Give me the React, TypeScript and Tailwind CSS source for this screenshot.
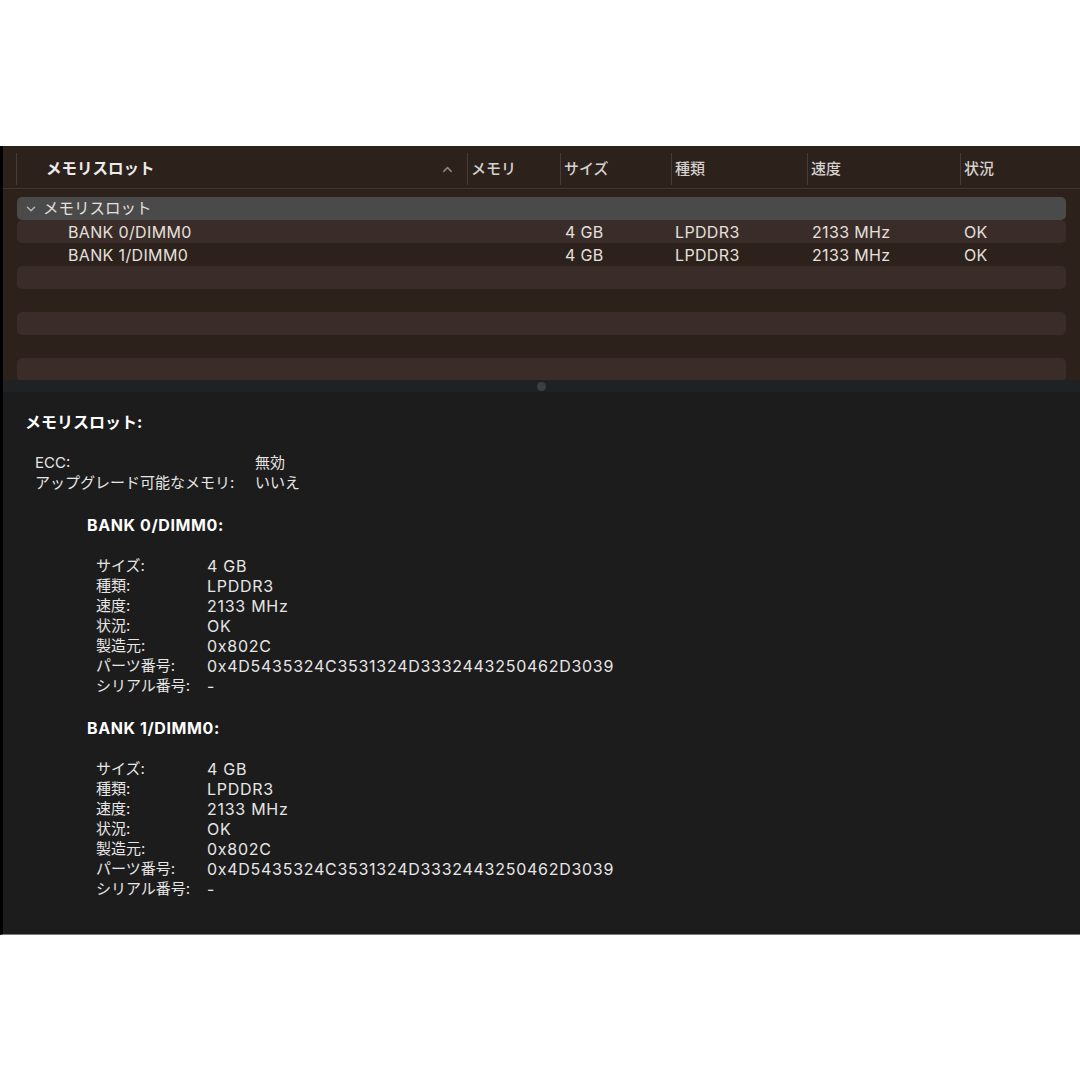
import { ChevronDown, ChevronUp } from "lucide-react";

const FONT = "font-['Inter','Noto_Sans_CJK_JP',sans-serif]";
// latin text in the source is wider than Inter at the same size
const LATIN = "text-[16px] tracking-[0.72px]";
const ROW_LATIN = "text-[16px] tracking-[0.35px]";

const columns = [
  { label: "メモリ", width: "w-[93px]" },
  { label: "サイズ", width: "w-[111px]" },
  { label: "種類", width: "w-[136px]" },
  { label: "速度", width: "w-[153px]" },
  { label: "状況", width: "flex-1" },
];

const banks = [
  {
    name: "BANK 0/DIMM0",
    size: "4 GB",
    type: "LPDDR3",
    speed: "2133 MHz",
    status: "OK",
    maker: "0x802C",
    part: "0x4D5435324C3531324D3332443250462D3039",
    serial: "-",
  },
  {
    name: "BANK 1/DIMM0",
    size: "4 GB",
    type: "LPDDR3",
    speed: "2133 MHz",
    status: "OK",
    maker: "0x802C",
    part: "0x4D5435324C3531324D3332443250462D3039",
    serial: "-",
  },
];

function Separator() {
  return <span className="w-px h-[32px] bg-[#4a3c36] shrink-0" />;
}

function HeaderRow() {
  return (
    <div className="h-[43px] pt-[4px] flex items-center border-b border-[#45352e] shrink-0">
      <div className="w-[13px] shrink-0" />
      <div className="w-[451px] flex items-center shrink-0">
        <Separator />
        <span className="pl-[29px] font-bold text-[15.5px] text-[#ececec]">メモリスロット</span>
        <ChevronUp className="ml-auto mr-[12px] w-[15px] h-[15px] text-[#8b8380]" strokeWidth={2.5} />
      </div>
      {columns.map((c) => (
        <div key={c.label} className={`${c.width} flex items-center shrink-0`}>
          <Separator />
          <span className="pl-[3px] font-medium text-[15px] text-[#d6d2d0]">{c.label}</span>
        </div>
      ))}
    </div>
  );
}

function DataRow({ bank, light }: { bank: (typeof banks)[number]; light: boolean }) {
  return (
    <div
      className={`h-[23px] flex items-center rounded-[5px] text-[#e4e0de] ${ROW_LATIN} ${
        light ? "bg-[#3a2c28]" : ""
      }`}
    >
      <div className="w-[450px] pl-[51px] shrink-0">{bank.name}</div>
      <div className="w-[93px] shrink-0" />
      <div className="w-[111px] pl-[5px] shrink-0">{bank.size}</div>
      <div className="w-[136px] pl-[4px] shrink-0">{bank.type}</div>
      <div className="w-[153px] pl-[5px] shrink-0">{bank.speed}</div>
      <div className="flex-1 pl-[4px]">{bank.status}</div>
    </div>
  );
}

function DetailRow({
  label,
  value,
  labelWidth,
  latin = true,
}: {
  label: string;
  value: string;
  labelWidth: string;
  latin?: boolean;
}) {
  return (
    <div className="flex h-[20px] items-center">
      <span className={`${labelWidth} shrink-0`}>{label}</span>
      <span className={latin ? LATIN : ""}>{value}</span>
    </div>
  );
}

export default function App() {
  return (
    <div className={`w-[1080px] h-[1080px] bg-white flex flex-col ${FONT}`}>
      <div className="h-[146px] shrink-0" />

      <div className="h-[789px] flex flex-col border-l-[3px] border-black bg-[#1c1c1c] border-b border-b-[#7a7a7a] shrink-0">
        {/* Table */}
        <div className="h-[234px] bg-[#2d211c] flex flex-col overflow-hidden shrink-0">
          <HeaderRow />
          <div className="pt-[8px] pl-[14px] pr-[14px] flex flex-col">
            <div className="h-[23px] flex items-center rounded-[5px] bg-[#4b4a4a] pl-[7px] text-[15.5px] text-[#e4e0de]">
              <ChevronDown className="w-[14px] h-[14px] text-[#b8b4b2]" strokeWidth={2.5} />
              <span className="pl-[5px]">メモリスロット</span>
            </div>
            {banks.map((b, i) => (
              <DataRow key={b.name} bank={b} light={i % 2 === 0} />
            ))}
            {[0, 1, 2, 3, 4].map((i) => (
              <div key={i} className={`h-[23px] shrink-0 rounded-[5px] ${i % 2 === 0 ? "bg-[#3a2c28]" : ""}`} />
            ))}
          </div>
        </div>

        {/* Splitter */}
        <div className="h-[12px] bg-[#202122] flex items-center justify-center shrink-0">
          <span className="w-[9px] h-[9px] rounded-full bg-[#3e3f40]" />
        </div>

        {/* Details */}
        <div className="pt-[20px] pl-[22px] text-[15px] text-[#e6e6e6] flex flex-col">
          <div className="h-[20px] flex items-center font-bold text-[16px] text-white">メモリスロット:</div>

          <div className="mt-[21px] pl-[10px] flex flex-col">
            <DetailRow label="ECC:" value="無効" labelWidth="w-[220px]" latin={false} />
            <DetailRow label="アップグレード可能なメモリ:" value="いいえ" labelWidth="w-[220px]" latin={false} />
          </div>

          {banks.map((b) => (
            <div key={b.name} className="mt-[22px] pl-[62px] flex flex-col">
              <div className="h-[20px] flex items-center font-bold text-white text-[16px] tracking-[0.6px]">
                {b.name}:
              </div>
              <div className="mt-[21px] pl-[9px] flex flex-col">
                <DetailRow label="サイズ:" value={b.size} labelWidth="w-[111px]" />
                <DetailRow label="種類:" value={b.type} labelWidth="w-[111px]" />
                <DetailRow label="速度:" value={b.speed} labelWidth="w-[111px]" />
                <DetailRow label="状況:" value={b.status} labelWidth="w-[111px]" />
                <DetailRow label="製造元:" value={b.maker} labelWidth="w-[111px]" />
                <DetailRow label="パーツ番号:" value={b.part} labelWidth="w-[111px]" />
                <DetailRow label="シリアル番号:" value={b.serial} labelWidth="w-[111px]" />
              </div>
            </div>
          ))}
        </div>
      </div>

      <div className="flex-1" />
    </div>
  );
}
